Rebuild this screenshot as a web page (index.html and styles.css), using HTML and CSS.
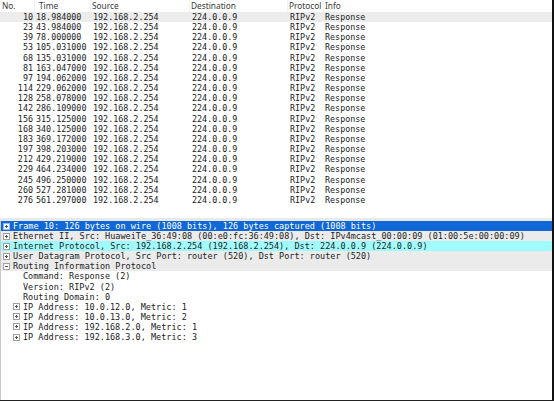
FILE: index.html
```html
<!DOCTYPE html>
<html>
<head>
<meta charset="utf-8">
<link rel="stylesheet" href="styles.css">
</head>
<body>
<div class="window">
  <div class="list">
    <div class="hdr">
      <span class="h-no">No.</span>
      <span class="h-time">Time</span>
      <span class="h-src">Source</span>
      <span class="h-dst">Destination</span>
      <span class="h-proto">Protocol</span>
      <span class="h-info">Info</span>
    </div>
    <div class="rows">
      <div class="row sel"><span class="c-no">10</span><span class="c-time">18.984000</span><span class="c-src">192.168.2.254</span><span class="c-dst">224.0.0.9</span><span class="c-proto">RIPv2</span><span class="c-info">Response</span></div>
      <div class="row"><span class="c-no">23</span><span class="c-time">43.984000</span><span class="c-src">192.168.2.254</span><span class="c-dst">224.0.0.9</span><span class="c-proto">RIPv2</span><span class="c-info">Response</span></div>
      <div class="row"><span class="c-no">39</span><span class="c-time">78.000000</span><span class="c-src">192.168.2.254</span><span class="c-dst">224.0.0.9</span><span class="c-proto">RIPv2</span><span class="c-info">Response</span></div>
      <div class="row"><span class="c-no">53</span><span class="c-time">105.031000</span><span class="c-src">192.168.2.254</span><span class="c-dst">224.0.0.9</span><span class="c-proto">RIPv2</span><span class="c-info">Response</span></div>
      <div class="row"><span class="c-no">68</span><span class="c-time">135.031000</span><span class="c-src">192.168.2.254</span><span class="c-dst">224.0.0.9</span><span class="c-proto">RIPv2</span><span class="c-info">Response</span></div>
      <div class="row"><span class="c-no">81</span><span class="c-time">163.047000</span><span class="c-src">192.168.2.254</span><span class="c-dst">224.0.0.9</span><span class="c-proto">RIPv2</span><span class="c-info">Response</span></div>
      <div class="row"><span class="c-no">97</span><span class="c-time">194.062000</span><span class="c-src">192.168.2.254</span><span class="c-dst">224.0.0.9</span><span class="c-proto">RIPv2</span><span class="c-info">Response</span></div>
      <div class="row"><span class="c-no">114</span><span class="c-time">229.062000</span><span class="c-src">192.168.2.254</span><span class="c-dst">224.0.0.9</span><span class="c-proto">RIPv2</span><span class="c-info">Response</span></div>
      <div class="row"><span class="c-no">128</span><span class="c-time">258.078000</span><span class="c-src">192.168.2.254</span><span class="c-dst">224.0.0.9</span><span class="c-proto">RIPv2</span><span class="c-info">Response</span></div>
      <div class="row"><span class="c-no">142</span><span class="c-time">286.109000</span><span class="c-src">192.168.2.254</span><span class="c-dst">224.0.0.9</span><span class="c-proto">RIPv2</span><span class="c-info">Response</span></div>
      <div class="row"><span class="c-no">156</span><span class="c-time">315.125000</span><span class="c-src">192.168.2.254</span><span class="c-dst">224.0.0.9</span><span class="c-proto">RIPv2</span><span class="c-info">Response</span></div>
      <div class="row"><span class="c-no">168</span><span class="c-time">340.125000</span><span class="c-src">192.168.2.254</span><span class="c-dst">224.0.0.9</span><span class="c-proto">RIPv2</span><span class="c-info">Response</span></div>
      <div class="row"><span class="c-no">183</span><span class="c-time">369.172000</span><span class="c-src">192.168.2.254</span><span class="c-dst">224.0.0.9</span><span class="c-proto">RIPv2</span><span class="c-info">Response</span></div>
      <div class="row"><span class="c-no">197</span><span class="c-time">398.203000</span><span class="c-src">192.168.2.254</span><span class="c-dst">224.0.0.9</span><span class="c-proto">RIPv2</span><span class="c-info">Response</span></div>
      <div class="row"><span class="c-no">212</span><span class="c-time">429.219000</span><span class="c-src">192.168.2.254</span><span class="c-dst">224.0.0.9</span><span class="c-proto">RIPv2</span><span class="c-info">Response</span></div>
      <div class="row"><span class="c-no">229</span><span class="c-time">464.234000</span><span class="c-src">192.168.2.254</span><span class="c-dst">224.0.0.9</span><span class="c-proto">RIPv2</span><span class="c-info">Response</span></div>
      <div class="row"><span class="c-no">245</span><span class="c-time">496.250000</span><span class="c-src">192.168.2.254</span><span class="c-dst">224.0.0.9</span><span class="c-proto">RIPv2</span><span class="c-info">Response</span></div>
      <div class="row"><span class="c-no">260</span><span class="c-time">527.281000</span><span class="c-src">192.168.2.254</span><span class="c-dst">224.0.0.9</span><span class="c-proto">RIPv2</span><span class="c-info">Response</span></div>
      <div class="row"><span class="c-no">276</span><span class="c-time">561.297000</span><span class="c-src">192.168.2.254</span><span class="c-dst">224.0.0.9</span><span class="c-proto">RIPv2</span><span class="c-info">Response</span></div>
    </div>
  </div>
  <div class="splitter"></div>
  <div class="detail">
    <div class="node blue"><svg class="box" width="7" height="7" viewBox="0 0 7 7"><rect x="0.5" y="0.5" width="6" height="6" fill="#f4f8ff" stroke="#9fb8e0"/><path d="M2 3.5H5M3.5 2V5" stroke="#2a5aa8" stroke-width="1"/></svg><span>Frame 10: 126 bytes on wire (1008 bits), 126 bytes captured (1008 bits)</span></div>
    <div class="node gray"><svg class="box" width="7" height="7" viewBox="0 0 7 7"><rect x="0.5" y="0.5" width="6" height="6" fill="#fff" stroke="#a0a0a0"/><path d="M2 3.5H5M3.5 2V5" stroke="#555" stroke-width="1"/></svg><span>Ethernet II, Src: HuaweiTe_36:49:08 (00:e0:fc:36:49:08), Dst: IPv4mcast_00:00:09 (01:00:5e:00:00:09)</span></div>
    <div class="node cyan"><svg class="box" width="7" height="7" viewBox="0 0 7 7"><rect x="0.5" y="0.5" width="6" height="6" fill="#fff" stroke="#a0a0a0"/><path d="M2 3.5H5M3.5 2V5" stroke="#555" stroke-width="1"/></svg><span>Internet Protocol, Src: 192.168.2.254 (192.168.2.254), Dst: 224.0.0.9 (224.0.0.9)</span></div>
    <div class="node gray"><svg class="box" width="7" height="7" viewBox="0 0 7 7"><rect x="0.5" y="0.5" width="6" height="6" fill="#fff" stroke="#a0a0a0"/><path d="M2 3.5H5M3.5 2V5" stroke="#555" stroke-width="1"/></svg><span>User Datagram Protocol, Src Port: router (520), Dst Port: router (520)</span></div>
    <div class="node gray"><svg class="box" width="7" height="7" viewBox="0 0 7 7"><rect x="0.5" y="0.5" width="6" height="6" fill="#fff" stroke="#a0a0a0"/><path d="M2 3.5H5" stroke="#555" stroke-width="1"/></svg><span>Routing Information Protocol</span></div>
    <div class="node leaf"><span>Command: Response (2)</span></div>
    <div class="node leaf"><span>Version: RIPv2 (2)</span></div>
    <div class="node leaf"><span>Routing Domain: 0</span></div>
    <div class="node child"><svg class="box" width="7" height="7" viewBox="0 0 7 7"><rect x="0.5" y="0.5" width="6" height="6" fill="#fff" stroke="#a0a0a0"/><path d="M2 3.5H5M3.5 2V5" stroke="#555" stroke-width="1"/></svg><span>IP Address: 10.0.12.0, Metric: 1</span></div>
    <div class="node child"><svg class="box" width="7" height="7" viewBox="0 0 7 7"><rect x="0.5" y="0.5" width="6" height="6" fill="#fff" stroke="#a0a0a0"/><path d="M2 3.5H5M3.5 2V5" stroke="#555" stroke-width="1"/></svg><span>IP Address: 10.0.13.0, Metric: 2</span></div>
    <div class="node child"><svg class="box" width="7" height="7" viewBox="0 0 7 7"><rect x="0.5" y="0.5" width="6" height="6" fill="#fff" stroke="#a0a0a0"/><path d="M2 3.5H5M3.5 2V5" stroke="#555" stroke-width="1"/></svg><span>IP Address: 192.168.2.0, Metric: 1</span></div>
    <div class="node child"><svg class="box" width="7" height="7" viewBox="0 0 7 7"><rect x="0.5" y="0.5" width="6" height="6" fill="#fff" stroke="#a0a0a0"/><path d="M2 3.5H5M3.5 2V5" stroke="#555" stroke-width="1"/></svg><span>IP Address: 192.168.3.0, Metric: 3</span></div>
  </div>
</div>
</body>
</html>
```
FILE: styles.css
```css
html, body {
  margin: 0;
  padding: 0;
  background: #fff;
}
.window {
  width: 552px;
  height: 400px;
  border-right: 2px solid #111;
  border-bottom: 1px solid #222;
  display: flex;
  flex-direction: column;
  overflow: hidden;
  font-family: "DejaVu Sans Mono", "Liberation Mono", monospace;
  font-size: 8.4px;
  color: #222;
}
.list {
  height: 217px;
  flex: none;
  display: flex;
  flex-direction: column;
}
.hdr {
  height: 12px;
  display: grid;
  grid-template-columns: 35px 56px 99px 98px 36px 1fr;
  font-family: "Noto Sans", "DejaVu Sans", sans-serif;
  font-size: 8.3px;
  color: #3a3a3a;
  line-height: 12px;
  white-space: nowrap;
}
.hdr span {
  border-right: 1px solid #f1f1f1;
  padding-left: 1px;
}
.hdr .h-no { padding-left: 2px; }
.hdr .h-time { padding-left: 4px; }
.hdr .h-info { border-right: none; }
.rows {
  display: flex;
  flex-direction: column;
}
.row {
  height: 10.17px;
  line-height: 10.17px;
  display: grid;
  grid-template-columns: 35px 56px 99px 98px 36px 1fr;
  white-space: nowrap;
}
.row.sel {
  background: #ececec;
}
.c-no {
  text-align: right;
  padding-right: 2px;
}
.c-time { padding-left: 1px; }
.c-src { padding-left: 2px; }
.c-dst { padding-left: 2px; }
.c-proto { padding-left: 2px; }
.c-info { padding-left: 1px; }
.splitter {
  height: 3px;
  margin-top: 1px;
  flex: none;
  background: #e9e9e9;
}
.detail {
  flex: 1;
  border-left: 1px solid #c8c8c8;
  display: flex;
  flex-direction: column;
  font-size: 8.5px;
}
.node {
  height: 10.1px;
  line-height: 10.1px;
  display: flex;
  align-items: center;
  padding-left: 2px;
  gap: 3px;
  white-space: nowrap;
}
.node .box {
  flex: none;
}
.node.blue {
  background: #1068d6;
  color: #fff;
}
.node.gray {
  background: #ebebeb;
}
.node.cyan {
  background: #a0fdfd;
}
.node.leaf {
  padding-left: 22px;
}
.node.child {
  padding-left: 12px;
}
```
